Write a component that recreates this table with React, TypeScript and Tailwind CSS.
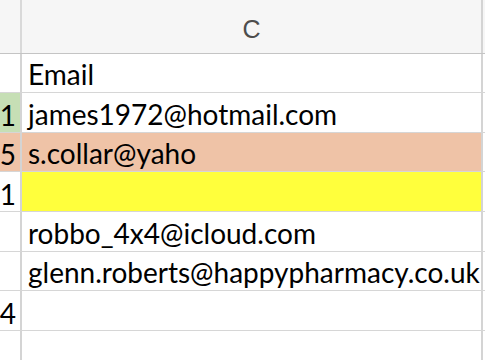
const rows = [
  { num: "", text: "Email", h: "h-[39px]", head: "bg-white", cell: "bg-white" },
  { num: "1", text: "james1972@hotmail.com", h: "h-[40px]", head: "bg-[#c6dfb5]", cell: "bg-white" },
  { num: "5", text: "s.collar@yaho", h: "h-[39px]", head: "bg-[#efc3a7]", cell: "bg-[#efc3a7]" },
  { num: "1", text: "", h: "h-[40px]", head: "bg-white", cell: "bg-[#ffff3c]" },
  { num: "", text: "robbo_4x4@icloud.com", h: "h-[40px]", head: "bg-white", cell: "bg-white" },
  { num: "", text: "glenn.roberts@happypharmacy.co.uk", h: "h-[39px]", head: "bg-white", cell: "bg-white" },
  { num: "4", text: "", h: "h-[40px]", head: "bg-white", cell: "bg-white" },
  { num: "", text: "", h: "h-[40px]", head: "bg-white", cell: "bg-white" },
];

export default function App() {
  return (
    <div className="w-[485px] h-[360px] overflow-hidden bg-white font-['Lato',sans-serif] text-black">
      {/* column header */}
      <div className="flex h-[54px] border-b border-[#c4c4c4] bg-[#f6f6f6]">
        <div className="w-[22px] border-r-2 border-[#d9d9d9]" />
        <div className="w-[461px] flex items-center justify-center pt-[6px] border-r-2 border-[#d4d4d4] font-['Liberation_Sans',sans-serif] text-[25px] text-[#4d4d4d]">
          C
        </div>
      </div>

      {rows.map((r, i) => (
        <div key={i} className={`flex ${r.h} border-b border-[#d6d6d6]`}>
          <div
            className={`w-[22px] shrink-0 overflow-hidden flex items-end justify-end pr-[4px] pb-[3px] border-r-2 border-[#d4d4d4] text-[28px] leading-none ${r.head}`}
          >
            {r.num}
          </div>
          <div
            className={`w-[461px] shrink-0 overflow-hidden whitespace-nowrap flex items-end pl-[6px] pb-[4px] border-r-2 border-[#d4d4d4] text-[28px] leading-none ${r.cell}`}
          >
            {r.text}
          </div>
        </div>
      ))}
    </div>
  );
}
